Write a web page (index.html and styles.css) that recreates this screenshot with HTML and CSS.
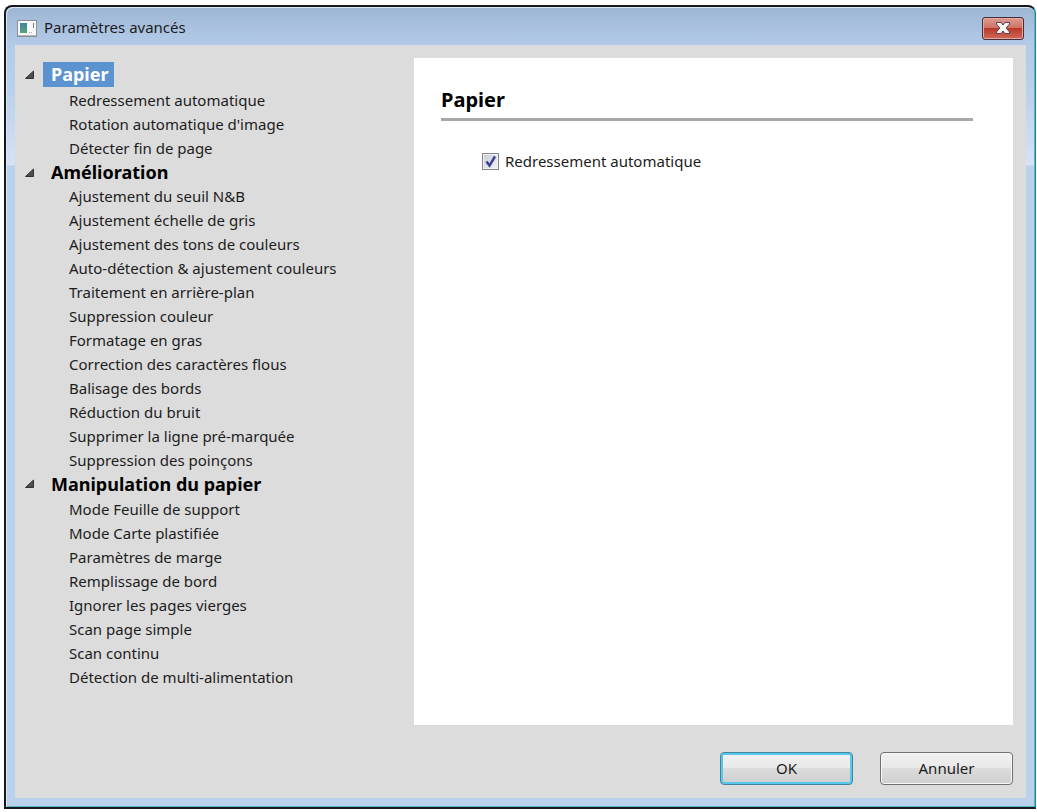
FILE: index.html
```html
<!DOCTYPE html>
<html lang="fr">
<head>
<meta charset="utf-8">
<title>Paramètres avancés</title>
<link rel="stylesheet" href="styles.css">
</head>
<body>
<div class="window">
  <header class="titlebar">
    <svg class="app-icon" width="20" height="17" viewBox="0 0 20 17" aria-hidden="true">
      <defs><linearGradient id="g" x1="0" y1="0" x2="0" y2="1"><stop offset="0" stop-color="#3f86a0"/><stop offset="1" stop-color="#5aa07c"/></linearGradient></defs>
      <rect x=".5" y=".5" width="19" height="16" fill="#f8f8f8" stroke="#8c8f94"/>
      <path d="M1 15.500h18" stroke="#b5b5b5"/>
      <rect x="3" y="3" width="7" height="10" fill="url(#g)"/>
      <path d="M16.500 3v5" stroke="#777"/>
      <path d="M12 12.500h1M14 12.500h1" stroke="#aaa"/>
    </svg>
    <h1 class="title">Paramètres avancés</h1>
    <button class="close" type="button" aria-label="Fermer">
      <svg width="16" height="12" viewBox="0 0 16 12" aria-hidden="true">
        <path d="M1.500 .5H6L8 3l2-2.500h4.500v1.500L11.200 6l3.300 4v1.500H10L8 9l-2 2.500H1.500V10l3.300-4L1.500 2z" fill="#f4f4f4" stroke="#5b4450" stroke-width="1"/>
      </svg>
    </button>
  </header>
  <main class="client">
    <nav class="tree">
      <details class="group" open>
        <summary class="heading"><svg class="arrow" width="9" height="9" viewBox="0 0 9 9"><path d="M8.500 1v7.500H.5z"/></svg><span class="label selected">Papier</span></summary>
        <ul class="items">
          <li><a href="#">Redressement automatique</a></li>
          <li><a href="#">Rotation automatique d'image</a></li>
          <li><a href="#">Détecter fin de page</a></li>
        </ul>
      </details>
      <details class="group" open>
        <summary class="heading"><svg class="arrow" width="9" height="9" viewBox="0 0 9 9"><path d="M8.500 1v7.500H.5z"/></svg><span class="label">Amélioration</span></summary>
        <ul class="items">
          <li><a href="#">Ajustement du seuil N&amp;B</a></li>
          <li><a href="#">Ajustement échelle de gris</a></li>
          <li><a href="#">Ajustement des tons de couleurs</a></li>
          <li><a href="#">Auto-détection &amp; ajustement couleurs</a></li>
          <li><a href="#">Traitement en arrière-plan</a></li>
          <li><a href="#">Suppression couleur</a></li>
          <li><a href="#">Formatage en gras</a></li>
          <li><a href="#">Correction des caractères flous</a></li>
          <li><a href="#">Balisage des bords</a></li>
          <li><a href="#">Réduction du bruit</a></li>
          <li><a href="#">Supprimer la ligne pré-marquée</a></li>
          <li><a href="#">Suppression des poinçons</a></li>
        </ul>
      </details>
      <details class="group" open>
        <summary class="heading"><svg class="arrow" width="9" height="9" viewBox="0 0 9 9"><path d="M8.500 1v7.500H.5z"/></svg><span class="label">Manipulation du papier</span></summary>
        <ul class="items">
          <li><a href="#">Mode Feuille de support</a></li>
          <li><a href="#">Mode Carte plastifiée</a></li>
          <li><a href="#">Paramètres de marge</a></li>
          <li><a href="#">Remplissage de bord</a></li>
          <li><a href="#">Ignorer les pages vierges</a></li>
          <li><a href="#">Scan page simple</a></li>
          <li><a href="#">Scan continu</a></li>
          <li><a href="#">Détection de multi-alimentation</a></li>
        </ul>
      </details>
    </nav>
    <section class="panel">
      <h2 class="panel-title">Papier</h2>
      <div class="option">
        <span class="box">
          <input class="check" type="checkbox" id="deskew" checked>
          <svg class="tick" width="17" height="17" viewBox="0 0 17 17" aria-hidden="true"><path d="M4.500 8.500l3 4L13 3.500" fill="none" stroke="#3f3f8f" stroke-width="2.400"/></svg>
        </span>
        <label for="deskew">Redressement automatique</label>
      </div>
    </section>
    <footer class="actions">
      <button class="btn default" type="button">OK</button>
      <button class="btn" type="button">Annuler</button>
    </footer>
  </main>
</div>
</body>
</html>
```
FILE: styles.css
```css
* { box-sizing: border-box; }
body {
  margin: 0;
  padding: 5px 1px 3px 4px;
  min-height: 100vh;
  display: flex;
  background: #fff;
  color: #1c1c1c;
  font: 15px/24px "Noto Sans", "Open Sans", sans-serif;
}
.window {
  flex: 1;
  display: flex;
  flex-direction: column;
  padding: 0 9px 9px;
  border: 1px solid #16181c;
  border-width: 2px 1px 2px 2px;
  border-right-color: #1c8a96;
  border-radius: 8px 8px 0 0;
  background: linear-gradient(#9db6d5 0, #b3cbe8 38px, #b9d0ea 80px, #d5e3f4 158px, #b9d1ea 159px);
  box-shadow: inset 1px 1px #d9e7f5, inset -1px -1px #58b7c4;
}
.titlebar {
  display: flex;
  align-items: center;
  height: 38px;
  padding: 8px 2px 0;
}
.app-icon { margin-bottom: 4px; }
.title { flex: 1; margin: 0 0 6px 7px; font-size: 15px; font-weight: 400; }
.close {
  display: grid;
  place-items: center;
  width: 42px;
  height: 23px;
  margin-bottom: 4px;
  padding: 0;
  border: 1px solid #4a2b38;
  border-radius: 3px;
  background: linear-gradient(#dc9c92 0, #cf7164 48%, #b83a29 50%, #d0685a 100%);
  box-shadow: inset 0 0 0 1px #e3aaa2;
}
.client {
  flex: 1;
  display: grid;
  grid-template-columns: 399px 1fr;
  grid-template-rows: 1fr auto;
  padding: 13px 13px 13px 0;
  background: #dcdcdc;
}
.tree { padding: 4px 10px 0; }
.heading {
  display: flex;
  align-items: center;
  height: 24px;
  list-style: none;
  color: #000;
  font-size: 18px;
  font-weight: 700;
}
.heading::-webkit-details-marker { display: none; }
.group:first-child .heading { height: 26px; padding-bottom: 1px; }
.group:last-child .heading { height: 25px; padding-bottom: 2px; }
.arrow { flex: none; margin-right: 9px; fill: #4d4d4d; stroke: #333; }
.label { padding: 0 8px; line-height: 24px; }
.selected { background: #5b92d0; color: #fff; line-height: 25px; padding-right: 5px; }
.items { margin: 0; padding: 0 0 0 44px; list-style: none; }
.items a { color: inherit; text-decoration: none; white-space: nowrap; }
.panel { padding: 28px 40px 28px 27px; background: #fff; }
.panel-title {
  margin: 0;
  padding-bottom: 4px;
  border-bottom: 3px solid #a8a8a8;
  color: #000;
  font-size: 20px;
  line-height: 28px;
}
.option { display: flex; align-items: center; gap: 6px; margin: 28px 0 0 41px; }
.box { display: grid; }
.check, .tick { grid-area: 1 / 1; width: 17px; height: 17px; margin: 0; }
.check {
  appearance: none;
  border: 1px solid #85878c;
  background: linear-gradient(135deg, #c5ccd8, #f3f3f5);
  box-shadow: inset 0 0 0 1px #f2f2f2;
}
.tick { visibility: hidden; pointer-events: none; }
.check:checked + .tick { visibility: visible; }
.actions { grid-column: 2; display: flex; justify-content: flex-end; gap: 27px; padding-top: 27px; }
.btn {
  width: 133px;
  height: 33px;
  padding: 0 0 2px;
  border: 1px solid #707070;
  border-radius: 4px;
  background: linear-gradient(#f2f2f2 0, #e8e8e8 49%, #dcdcdc 50%, #cfcfcf 100%);
  box-shadow: inset 0 0 0 1px #f8f8f8;
  color: #1c1c1c;
  font: inherit;
}
.default { border-color: #43839c; box-shadow: inset 0 0 0 2px #56c8ee; }
```
